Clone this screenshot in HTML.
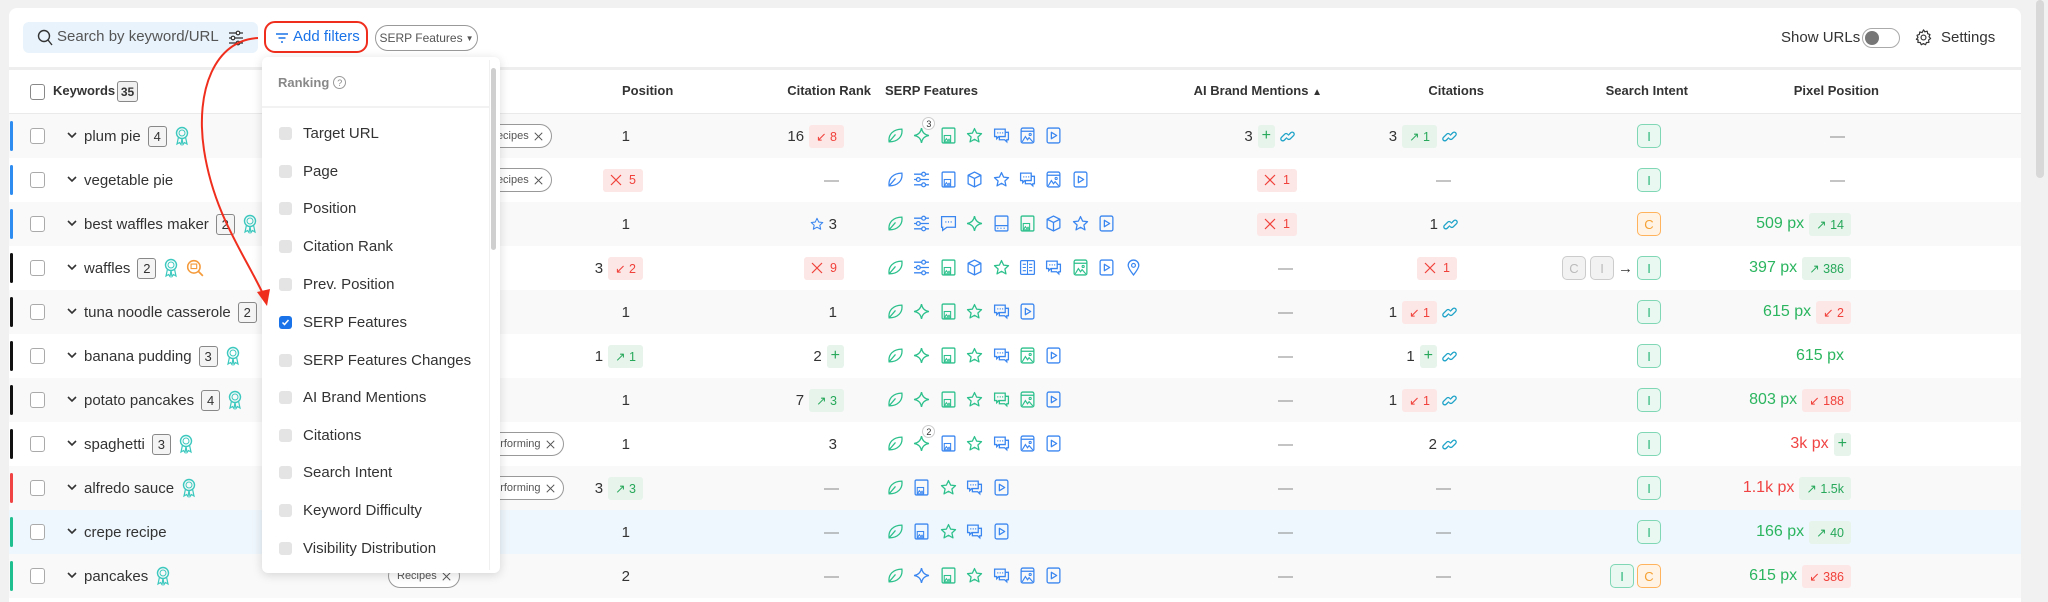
<!DOCTYPE html>
<html style="height:602px;overflow:hidden"><head><meta charset="utf-8"><style>
*{box-sizing:border-box;margin:0;padding:0}
body{width:2048px;height:602px;background:#f1f1f1;font-family:"Liberation Sans",Arial,sans-serif;color:#333;position:relative;overflow:hidden}
.card{position:absolute;left:9px;top:8px;width:2012px;height:594px;background:#fff;border-radius:8px 8px 0 0}
.abs{position:absolute}
.row{position:absolute;left:9px;width:2012px;height:44px}
.gry{background:#f9f9f9}
.blu{background:#eef7fd}
.bar{position:absolute;left:1px;top:7px;width:3px;height:30px;border-radius:2px}
.cb{position:absolute;left:21px;top:14px;width:15px;height:16px;border:1px solid #aaa;border-radius:3px;background:#fff}
.chev{position:absolute;left:57px;top:15px;width:12px;height:12px}
.kw{position:absolute;left:75px;top:0;height:44px;display:flex;align-items:center;gap:7px;font-size:15px;color:#333}
.cnt{display:inline-flex;align-items:center;justify-content:center;min-width:19px;height:21px;border:1px solid #888;border-radius:3px;background:#f4f4f4;font-size:13px;padding:0 4px}
.cell{position:absolute;top:0;height:44px;display:flex;align-items:center;gap:5px;font-size:15px;color:#333;white-space:nowrap}
.bd{display:inline-flex;align-items:center;justify-content:center;gap:7px;height:23px;padding:0 7px;border-radius:3px;font-size:12.5px}
.r{background:#fde6e6;color:#f0413a}
.g{background:#e6f4eb;color:#27a85a}
.dash{color:#888}
.icons{position:absolute;left:878px;top:13px;height:18px;display:flex}
.icons svg{width:17px;height:17px;margin-right:9.4px;flex:none}
.gc{color:#2cc08c}.bc{color:#3a86f0}
.si{display:inline-flex;align-items:center;justify-content:center;width:24px;height:24px;border-radius:5px;font-size:13px}
.sI{border:1px solid #7fd7b6;background:#e9f8f1;color:#2bb87a}
.sC{border:1px solid #ffb35c;background:#fff3e6;color:#f5a030}
.sG{border:1px solid #ccc;background:#f2f2f2;color:#bbb}
.px{color:#2bb55f;font-size:16px}
.pxr{color:#f04444;font-size:16px}
.hd{position:absolute;top:83px;font-size:13px;font-weight:bold;color:#333;white-space:nowrap}
.pill{position:absolute;height:24px;border:1px solid #999;border-radius:12px;background:#fff;font-size:11px;color:#555;display:flex;align-items:center;gap:5px;padding:0 8px}
.dd{position:absolute;left:262px;top:57px;width:238px;height:516px;background:#fff;border-radius:6px;box-shadow:0 2px 10px rgba(0,0,0,.15)}
.it{position:absolute;left:17px;display:flex;align-items:center;gap:11px;font-size:15px;color:#333;height:20px}
.it i{display:block;width:13px;height:13px;border-radius:3px;background:#e4e4e4}
svg{overflow:visible}
</style></head><body>
<svg width="0" height="0" style="position:absolute">
<defs>
<symbol id="leaf" viewBox="0 0 16 16"><path d="M2 14C1 7 6 2 14 2c1 7-4 12-12 12zM2 14L8 7" fill="none" stroke="currentColor" stroke-width="1.2"/></symbol>
<symbol id="spk" viewBox="0 0 16 16"><path d="M8 1C8.6 5 11 7.4 15 8 11 8.6 8.6 11 8 15 7.4 11 5 8.6 1 8 5 7.4 7.4 5 8 1z" fill="none" stroke="currentColor" stroke-width="1.2"/></symbol>
<symbol id="ibx" viewBox="0 0 16 16"><rect x="2" y="1" width="12" height="14" rx="1" fill="none" stroke="currentColor" stroke-width="1.2"/><rect x="4" y="8" width="6" height="6" fill="none" stroke="currentColor" stroke-width="1"/><path d="M4 14l2-3 1.5 2 1-1.5L10 14" fill="none" stroke="currentColor" stroke-width="1"/></symbol>
<symbol id="star" viewBox="0 0 16 16"><path d="M8 1.5l2 4.3 4.6.5-3.4 3.1 1 4.6L8 11.6 3.8 14l1-4.6L1.4 6.3 6 5.8z" fill="none" stroke="currentColor" stroke-width="1.2" stroke-linejoin="round"/></symbol>
<symbol id="chat" viewBox="0 0 16 16"><path d="M1.5 2h10v7h-6l-2 2V9h-2z" fill="none" stroke="currentColor" stroke-width="1.2"/><path d="M11.5 5h3v7h-1.5v2l-2-2h-5v-3" fill="none" stroke="currentColor" stroke-width="1.2"/><path d="M4 5.5h1M6.3 5.5h1M8.6 5.5h1" stroke="currentColor" stroke-width="1.2"/></symbol>
<symbol id="pic" viewBox="0 0 16 16"><rect x="2" y="1" width="12" height="14" rx="1.5" fill="none" stroke="currentColor" stroke-width="1.2"/><path d="M2 4h12" stroke="currentColor" stroke-width="1.2"/><circle cx="10.5" cy="7" r="1" fill="none" stroke="currentColor"/><path d="M3 14l3-5 2 3 1.5-2L13 14" fill="none" stroke="currentColor" stroke-width="1.1"/></symbol>
<symbol id="play" viewBox="0 0 16 16"><rect x="2" y="1" width="12" height="14" rx="1.5" fill="none" stroke="currentColor" stroke-width="1.2"/><path d="M6 5v6l5-3z" fill="none" stroke="currentColor" stroke-width="1.2" stroke-linejoin="round"/></symbol>
<symbol id="sld" viewBox="0 0 16 16"><path d="M1 3h14M1 8h14M1 13h14" stroke="currentColor" stroke-width="1.2"/><circle cx="10" cy="3" r="1.8" fill="#fff" stroke="currentColor" stroke-width="1.2"/><circle cx="5" cy="8" r="1.8" fill="#fff" stroke="currentColor" stroke-width="1.2"/><circle cx="10" cy="13" r="1.8" fill="#fff" stroke="currentColor" stroke-width="1.2"/></symbol>
<symbol id="cube" viewBox="0 0 16 16"><path d="M8 1l6 3v8l-6 3-6-3V4zM2 4l6 3 6-3M8 7v8" fill="none" stroke="currentColor" stroke-width="1.2" stroke-linejoin="round"/></symbol>
<symbol id="book" viewBox="0 0 16 16"><rect x="1.5" y="1.5" width="13" height="13" rx="1" fill="none" stroke="currentColor" stroke-width="1.2"/><path d="M8 1.5v13M3.5 5h3M3.5 8h3M3.5 11h3M9.5 5h3M9.5 8h3M9.5 11h3" stroke="currentColor" stroke-width="1"/></symbol>
<symbol id="pin" viewBox="0 0 16 16"><path d="M8 15C4 10 3 8 3 6a5 5 0 0110 0c0 2-1 4-5 9z" fill="none" stroke="currentColor" stroke-width="1.2"/><circle cx="8" cy="6" r="1.8" fill="none" stroke="currentColor" stroke-width="1.1"/></symbol>
<symbol id="cmt" viewBox="0 0 16 16"><path d="M1.5 1.5h13v10h-8l-4 3v-3h-1z" fill="none" stroke="currentColor" stroke-width="1.2"/><path d="M5 6.5h1M7.5 6.5h1M10 6.5h1" stroke="currentColor" stroke-width="1.3"/></symbol>
<symbol id="ibl" viewBox="0 0 16 16"><rect x="2" y="1" width="12" height="14" rx="1" fill="none" stroke="currentColor" stroke-width="1.2"/><path d="M2 10h12M4 12.5h1M7 12.5h1M10 12.5h1" stroke="currentColor" stroke-width="1.2"/></symbol>
<symbol id="lnk" viewBox="0 0 16 16"><path d="M7 9.5l-2.5 2.5a2 2 0 01-3-3L5 5.5a2 2 0 013 0M9 6.5l2.5-2.5a2 2 0 013 3L11 10.5a2 2 0 01-3 0" fill="none" stroke="#1fa3c8" stroke-width="1.4" stroke-linecap="round"/></symbol>
<symbol id="awd" viewBox="0 0 16 20"><circle cx="8" cy="7" r="5.5" fill="none" stroke="currentColor" stroke-width="1.4"/><circle cx="8" cy="7" r="3" fill="none" stroke="currentColor" stroke-width="1"/><path d="M4.5 11l-1.5 7 2.5-1.5 1.5 2 1-6M11.5 11l1.5 7-2.5-1.5-1.5 2-1-6" fill="none" stroke="currentColor" stroke-width="1.2"/></symbol>
<symbol id="chv" viewBox="0 0 12 12"><path d="M2 4l4 4 4-4" fill="none" stroke="#333" stroke-width="1.6"/></symbol>
<symbol id="x" viewBox="0 0 12 12"><path d="M1 1l10 10M11 1L1 11" stroke="currentColor" stroke-width="1.2"/></symbol>
</defs></svg>

<div class="card"></div>
<div class="abs" style="left:2036px;top:0;width:8px;height:178px;background:#d8d8d8;border-radius:4px"></div>

<div class="abs" style="left:23px;top:22px;width:235px;height:31px;background:#e8f3fc;border-radius:6px"></div>
<svg class="abs" style="left:37px;top:29px" width="16" height="17" viewBox="0 0 16 17"><circle cx="7" cy="7" r="5.5" fill="none" stroke="#333" stroke-width="1.4"/><path d="M11 11l4 5" stroke="#333" stroke-width="1.4"/></svg>
<div class="abs" style="left:57px;top:28px;font-size:15px;color:#555">Search by keyword/URL</div>
<svg class="abs" style="left:228px;top:30px" width="16" height="16"><use href="#sld" style="color:#333"/></svg>
<div class="abs" style="left:264px;top:21px;width:104px;height:32px;border:2px solid #f02e1e;border-radius:11px"></div>
<svg class="abs" style="left:275px;top:33px" width="14" height="10"><path d="M1 1h12M3.5 5h7M6 9h2" stroke="#1a73e8" stroke-width="1.4"/></svg>
<div class="abs" style="left:293px;top:28px;font-size:15px;color:#1a73e8">Add filters</div>
<div class="abs" style="left:375px;top:25px;width:103px;height:26px;border:1px solid #999;border-radius:13px;font-size:12px;color:#555;display:flex;align-items:center;justify-content:center">SERP Features <span style="font-size:8px;margin-left:3px">▼</span></div>
<div class="abs" style="left:1781px;top:29px;font-size:15px;color:#333">Show URLs</div>
<div class="abs" style="left:1862px;top:28px;width:38px;height:20px;border:1px solid #aaa;border-radius:10px;background:#fff"><div style="position:absolute;left:2px;top:2px;width:14px;height:14px;border-radius:7px;background:#777"></div></div>
<svg class="abs" style="left:1915px;top:29px" width="17" height="17" viewBox="0 0 16 16"><path d="M8 .8l1.3 1.9 2.2-.6.4 2.3 2.2.8-.9 2.1 1.5 1.7-1.9 1.3.3 2.3-2.3.1-.9 2.1-2-1.1-2 1.1-.9-2.1-2.3-.1.3-2.3L1.3 9.7 2.8 8 1.9 5.9l2.2-.8.4-2.3 2.2.6z" fill="none" stroke="#333" stroke-width="1.1" stroke-linejoin="round"/><circle cx="8" cy="8" r="2.3" fill="none" stroke="#333" stroke-width="1.1"/></svg>
<div class="abs" style="left:1941px;top:29px;font-size:15px;color:#333">Settings</div>
<div class="abs" style="left:9px;top:67px;width:2012px;height:3px;background:#eeeeee"></div>

<div class="abs" style="left:30px;top:84px;width:15px;height:16px;border:1px solid #888;border-radius:3px"></div>
<div class="hd" style="left:53px">Keywords</div>
<div class="abs" style="left:117px;top:81px;width:21px;height:21px;border:1px solid #888;border-radius:3px;background:#f0f0f0;font-size:12px;font-weight:bold;display:flex;align-items:center;justify-content:center">35</div>
<div class="hd" style="left:622px">Position</div>
<div class="hd" style="right:1177px">Citation Rank</div>
<div class="hd" style="left:885px">SERP Features</div>
<div class="hd" style="right:726px">AI Brand Mentions <span style="font-size:10px">▲</span></div>
<div class="hd" style="right:564px">Citations</div>
<div class="hd" style="right:360px">Search Intent</div>
<div class="hd" style="right:169px">Pixel Position</div>
<div class="abs" style="left:9px;top:113px;width:2012px;height:1px;background:#eaeaea"></div>

<div class="row gry" style="top:114px">
<div class="bar" style="background:#2e8cf0"></div><div class="cb"></div><svg class="chev"><use href="#chv"/></svg>
<div class="kw">plum pie <span class="cnt">4</span><svg width="16" height="20" style="color:#3cc8be"><use href="#awd"/></svg></div>
<div class="pill" style="left:471px;top:10px">Recipes <svg width="9" height="9"><use href="#x"/></svg></div>
<div class="cell" style="right:1391px">1</div>
<div class="cell" style="right:1177px">16 <span class="bd r">↙ 8</span></div>
<div class="icons"><svg class="gc"><use href="#leaf"/></svg><span style="position:relative"><svg class="gc"><use href="#spk"/></svg><span style="position:absolute;left:9px;top:-10px;width:13px;height:13px;border-radius:7px;border:1px solid #ccc;background:#fff;font-size:9px;display:flex;align-items:center;justify-content:center">3</span></span><svg class="gc"><use href="#ibx"/></svg><svg class="gc"><use href="#star"/></svg><svg class="bc"><use href="#chat"/></svg><svg class="bc"><use href="#pic"/></svg><svg class="bc"><use href="#play"/></svg></div>
<div class="cell" style="right:726px">3 <span class="bd g" style="padding:0 4px;font-size:16px">+</span><svg width="15" height="15"><use href="#lnk"/></svg></div>
<div class="cell" style="right:564px">3 <span class="bd g">↗ 1</span><svg width="15" height="15"><use href="#lnk"/></svg></div>
<div class="cell" style="right:360px"><span class="si sI">I</span></div>
<div class="cell dash" style="right:176px">—</div>
</div>
<div class="row" style="top:158px">
<div class="bar" style="background:#2e8cf0"></div><div class="cb"></div><svg class="chev"><use href="#chv"/></svg>
<div class="kw">vegetable pie</div>
<div class="pill" style="left:471px;top:10px">Recipes <svg width="9" height="9"><use href="#x"/></svg></div>
<div class="cell" style="right:1378px"><span class="bd r"><svg width="12" height="12"><use href="#x"/></svg> 5</span></div>
<div class="cell dash" style="right:1182px">—</div>
<div class="icons"><svg class="bc"><use href="#leaf"/></svg><svg class="bc"><use href="#sld"/></svg><svg class="bc"><use href="#ibx"/></svg><svg class="bc"><use href="#cube"/></svg><svg class="bc"><use href="#star"/></svg><svg class="bc"><use href="#chat"/></svg><svg class="bc"><use href="#pic"/></svg><svg class="bc"><use href="#play"/></svg></div>
<div class="cell" style="right:724px"><span class="bd r"><svg width="12" height="12"><use href="#x"/></svg> 1</span></div>
<div class="cell dash" style="right:570px">—</div>
<div class="cell" style="right:360px"><span class="si sI">I</span></div>
<div class="cell dash" style="right:176px">—</div>
</div>
<div class="row gry" style="top:202px">
<div class="bar" style="background:#2e8cf0"></div><div class="cb"></div><svg class="chev"><use href="#chv"/></svg>
<div class="kw">best waffles maker <span class="cnt">2</span><svg width="16" height="20" style="color:#3cc8be"><use href="#awd"/></svg></div>
<div class="cell" style="right:1391px">1</div>
<div class="cell" style="right:1184px"><svg width="14" height="16" class="bc"><use href="#star"/></svg>3</div>
<div class="icons"><svg class="gc"><use href="#leaf"/></svg><svg class="bc"><use href="#sld"/></svg><svg class="bc"><use href="#cmt"/></svg><svg class="gc"><use href="#spk"/></svg><svg class="bc"><use href="#ibl"/></svg><svg class="gc"><use href="#ibx"/></svg><svg class="bc"><use href="#cube"/></svg><svg class="bc"><use href="#star"/></svg><svg class="bc"><use href="#play"/></svg></div>
<div class="cell" style="right:724px"><span class="bd r"><svg width="12" height="12"><use href="#x"/></svg> 1</span></div>
<div class="cell" style="right:563px">1 <svg width="15" height="15"><use href="#lnk"/></svg></div>
<div class="cell" style="right:360px"><span class="si sC">C</span></div>
<div class="cell" style="right:170px"><span class="px">509 px</span><span class="bd g">↗ 14</span></div>
</div>
<div class="row" style="top:246px">
<div class="bar" style="background:#111"></div><div class="cb"></div><svg class="chev"><use href="#chv"/></svg>
<div class="kw">waffles <span class="cnt">2</span><svg width="16" height="20" style="color:#3cc8be"><use href="#awd"/></svg><svg width="18" height="18" viewBox="0 0 16 16"><circle cx="7" cy="7" r="5.5" fill="none" stroke="#f59a3a" stroke-width="1.4"/><rect x="4.5" y="4.5" width="5" height="4" fill="none" stroke="#f59a3a"/><path d="M11 11l4 4" stroke="#f59a3a" stroke-width="1.5"/></svg></div>
<div class="cell" style="right:1378px">3 <span class="bd r">↙ 2</span></div>
<div class="cell" style="right:1177px"><span class="bd r"><svg width="12" height="12"><use href="#x"/></svg> 9</span></div>
<div class="icons"><svg class="gc"><use href="#leaf"/></svg><svg class="bc"><use href="#sld"/></svg><svg class="gc"><use href="#ibx"/></svg><svg class="bc"><use href="#cube"/></svg><svg class="gc"><use href="#star"/></svg><svg class="bc"><use href="#book"/></svg><svg class="bc"><use href="#chat"/></svg><svg class="gc"><use href="#pic"/></svg><svg class="bc"><use href="#play"/></svg><svg class="bc"><use href="#pin"/></svg></div>
<div class="cell dash" style="right:728px">—</div>
<div class="cell" style="right:564px"><span class="bd r"><svg width="12" height="12"><use href="#x"/></svg> 1</span></div>
<div class="cell" style="right:360px;gap:4px"><span class="si sG">C</span><span class="si sG">I</span><span style="font-size:15px">→</span><span class="si sI">I</span></div>
<div class="cell" style="right:170px"><span class="px">397 px</span><span class="bd g">↗ 386</span></div>
</div>
<div class="row gry" style="top:290px">
<div class="bar" style="background:#111"></div><div class="cb"></div><svg class="chev"><use href="#chv"/></svg>
<div class="kw">tuna noodle casserole <span class="cnt">2</span></div>
<div class="cell" style="right:1391px">1</div>
<div class="cell" style="right:1184px">1</div>
<div class="icons"><svg class="gc"><use href="#leaf"/></svg><svg class="gc"><use href="#spk"/></svg><svg class="gc"><use href="#ibx"/></svg><svg class="gc"><use href="#star"/></svg><svg class="bc"><use href="#chat"/></svg><svg class="bc"><use href="#play"/></svg></div>
<div class="cell dash" style="right:728px">—</div>
<div class="cell" style="right:564px">1 <span class="bd r">↙ 1</span><svg width="15" height="15"><use href="#lnk"/></svg></div>
<div class="cell" style="right:360px"><span class="si sI">I</span></div>
<div class="cell" style="right:170px"><span class="px">615 px</span><span class="bd r">↙ 2</span></div>
</div>
<div class="row" style="top:334px">
<div class="bar" style="background:#111"></div><div class="cb"></div><svg class="chev"><use href="#chv"/></svg>
<div class="kw">banana pudding <span class="cnt">3</span><svg width="16" height="20" style="color:#3cc8be"><use href="#awd"/></svg></div>
<div class="cell" style="right:1378px">1 <span class="bd g">↗ 1</span></div>
<div class="cell" style="right:1177px">2 <span class="bd g" style="padding:0 4px;font-size:16px">+</span></div>
<div class="icons"><svg class="gc"><use href="#leaf"/></svg><svg class="gc"><use href="#spk"/></svg><svg class="gc"><use href="#ibx"/></svg><svg class="gc"><use href="#star"/></svg><svg class="bc"><use href="#chat"/></svg><svg class="gc"><use href="#pic"/></svg><svg class="bc"><use href="#play"/></svg></div>
<div class="cell dash" style="right:728px">—</div>
<div class="cell" style="right:564px">1 <span class="bd g" style="padding:0 4px;font-size:16px">+</span><svg width="15" height="15"><use href="#lnk"/></svg></div>
<div class="cell" style="right:360px"><span class="si sI">I</span></div>
<div class="cell" style="right:177px"><span class="px">615 px</span></div>
</div>
<div class="row gry" style="top:378px">
<div class="bar" style="background:#111"></div><div class="cb"></div><svg class="chev"><use href="#chv"/></svg>
<div class="kw">potato pancakes <span class="cnt">4</span><svg width="16" height="20" style="color:#3cc8be"><use href="#awd"/></svg></div>
<div class="cell" style="right:1391px">1</div>
<div class="cell" style="right:1177px">7 <span class="bd g">↗ 3</span></div>
<div class="icons"><svg class="gc"><use href="#leaf"/></svg><svg class="gc"><use href="#spk"/></svg><svg class="gc"><use href="#ibx"/></svg><svg class="gc"><use href="#star"/></svg><svg class="gc"><use href="#chat"/></svg><svg class="gc"><use href="#pic"/></svg><svg class="bc"><use href="#play"/></svg></div>
<div class="cell dash" style="right:728px">—</div>
<div class="cell" style="right:564px">1 <span class="bd r">↙ 1</span><svg width="15" height="15"><use href="#lnk"/></svg></div>
<div class="cell" style="right:360px"><span class="si sI">I</span></div>
<div class="cell" style="right:170px"><span class="px">803 px</span><span class="bd r">↙ 188</span></div>
</div>
<div class="row" style="top:422px">
<div class="bar" style="background:#111"></div><div class="cb"></div><svg class="chev"><use href="#chv"/></svg>
<div class="kw">spaghetti <span class="cnt">3</span><svg width="16" height="20" style="color:#3cc8be"><use href="#awd"/></svg></div>
<div class="pill" style="left:440px;top:10px">Underperforming <svg width="9" height="9"><use href="#x"/></svg></div>
<div class="cell" style="right:1391px">1</div>
<div class="cell" style="right:1184px">3</div>
<div class="icons"><svg class="gc"><use href="#leaf"/></svg><span style="position:relative"><svg class="gc"><use href="#spk"/></svg><span style="position:absolute;left:9px;top:-10px;width:13px;height:13px;border-radius:7px;border:1px solid #ccc;background:#fff;font-size:9px;display:flex;align-items:center;justify-content:center">2</span></span><svg class="bc"><use href="#ibx"/></svg><svg class="gc"><use href="#star"/></svg><svg class="bc"><use href="#chat"/></svg><svg class="bc"><use href="#pic"/></svg><svg class="bc"><use href="#play"/></svg></div>
<div class="cell dash" style="right:728px">—</div>
<div class="cell" style="right:564px">2 <svg width="15" height="15"><use href="#lnk"/></svg></div>
<div class="cell" style="right:360px"><span class="si sI">I</span></div>
<div class="cell" style="right:170px"><span class="pxr">3k px</span><span class="bd g" style="padding:0 4px;font-size:16px">+</span></div>
</div>
<div class="row gry" style="top:466px">
<div class="bar" style="background:#f04444"></div><div class="cb"></div><svg class="chev"><use href="#chv"/></svg>
<div class="kw">alfredo sauce <svg width="16" height="20" style="color:#3cc8be"><use href="#awd"/></svg></div>
<div class="pill" style="left:440px;top:10px">Underperforming <svg width="9" height="9"><use href="#x"/></svg></div>
<div class="cell" style="right:1378px">3 <span class="bd g">↗ 3</span></div>
<div class="cell dash" style="right:1182px">—</div>
<div class="icons"><svg class="gc"><use href="#leaf"/></svg><svg class="bc"><use href="#ibx"/></svg><svg class="gc"><use href="#star"/></svg><svg class="bc"><use href="#chat"/></svg><svg class="bc"><use href="#play"/></svg></div>
<div class="cell dash" style="right:728px">—</div>
<div class="cell dash" style="right:570px">—</div>
<div class="cell" style="right:360px"><span class="si sI">I</span></div>
<div class="cell" style="right:170px"><span class="pxr">1.1k px</span><span class="bd g">↗ 1.5k</span></div>
</div>
<div class="row blu" style="top:510px">
<div class="bar" style="background:#1fbf8f"></div><div class="cb"></div><svg class="chev"><use href="#chv"/></svg>
<div class="kw">crepe recipe</div>
<div class="cell" style="right:1391px">1</div>
<div class="cell dash" style="right:1182px">—</div>
<div class="icons"><svg class="gc"><use href="#leaf"/></svg><svg class="bc"><use href="#ibx"/></svg><svg class="gc"><use href="#star"/></svg><svg class="bc"><use href="#chat"/></svg><svg class="bc"><use href="#play"/></svg></div>
<div class="cell dash" style="right:728px">—</div>
<div class="cell dash" style="right:570px">—</div>
<div class="cell" style="right:360px"><span class="si sI">I</span></div>
<div class="cell" style="right:170px"><span class="px">166 px</span><span class="bd g">↗ 40</span></div>
</div>
<div class="row gry" style="top:554px">
<div class="bar" style="background:#1fbf8f"></div><div class="cb"></div><svg class="chev"><use href="#chv"/></svg>
<div class="kw">pancakes <svg width="16" height="20" style="color:#3cc8be"><use href="#awd"/></svg></div>
<div class="pill" style="left:379px;top:10px">Recipes <svg width="9" height="9"><use href="#x"/></svg></div>
<div class="cell" style="right:1391px">2</div>
<div class="cell dash" style="right:1182px">—</div>
<div class="icons"><svg class="gc"><use href="#leaf"/></svg><svg class="bc"><use href="#spk"/></svg><svg class="gc"><use href="#ibx"/></svg><svg class="gc"><use href="#star"/></svg><svg class="bc"><use href="#chat"/></svg><svg class="bc"><use href="#pic"/></svg><svg class="bc"><use href="#play"/></svg></div>
<div class="cell dash" style="right:728px">—</div>
<div class="cell dash" style="right:570px">—</div>
<div class="cell" style="right:360px;gap:3px"><span class="si sI">I</span><span class="si sC">C</span></div>
<div class="cell" style="right:170px"><span class="px">615 px</span><span class="bd r">↙ 386</span></div>
</div>

<div class="dd">
<div class="abs" style="left:16px;top:18px;font-size:13px;font-weight:bold;color:#888;display:flex;align-items:center;gap:4px">Ranking <span style="display:inline-flex;width:13px;height:13px;border:1px solid #999;border-radius:7px;font-size:9px;align-items:center;justify-content:center;font-weight:normal">?</span></div>
<div class="abs" style="left:0;top:49px;width:228px;height:2px;background:#f2f2f2"></div>
<div class="abs" style="left:227px;top:3px;width:1px;height:510px;background:#f0f0f0"></div>
<div class="abs" style="left:229px;top:11px;width:5px;height:182px;background:#cfcfcf;border-radius:3px"></div>
<div class="it" style="top:66px"><i></i>Target URL</div>
<div class="it" style="top:104px"><i></i>Page</div>
<div class="it" style="top:141px"><i></i>Position</div>
<div class="it" style="top:179px"><i></i>Citation Rank</div>
<div class="it" style="top:217px"><i></i>Prev. Position</div>
<div class="it" style="top:255px"><i style="background:#1a73e8;position:relative"><svg width="13" height="13" style="position:absolute;left:0;top:0"><path d="M3.5 6.5l2 2 4-4.5" fill="none" stroke="#fff" stroke-width="1.5"/></svg></i>SERP Features</div>
<div class="it" style="top:293px"><i></i>SERP Features Changes</div>
<div class="it" style="top:330px"><i></i>AI Brand Mentions</div>
<div class="it" style="top:368px"><i></i>Citations</div>
<div class="it" style="top:405px"><i></i>Search Intent</div>
<div class="it" style="top:443px"><i></i>Keyword Difficulty</div>
<div class="it" style="top:481px"><i></i>Visibility Distribution</div>
</div>

<svg class="abs" style="left:0;top:0" width="600" height="602">
<path d="M258 38 C215 40 195 90 204 150 C214 215 245 255 264 296" fill="none" stroke="#f02e1e" stroke-width="2"/>
<path d="M257 292 L267 306 L270 289 Z" fill="#f02e1e"/>
</svg>
</body></html>
